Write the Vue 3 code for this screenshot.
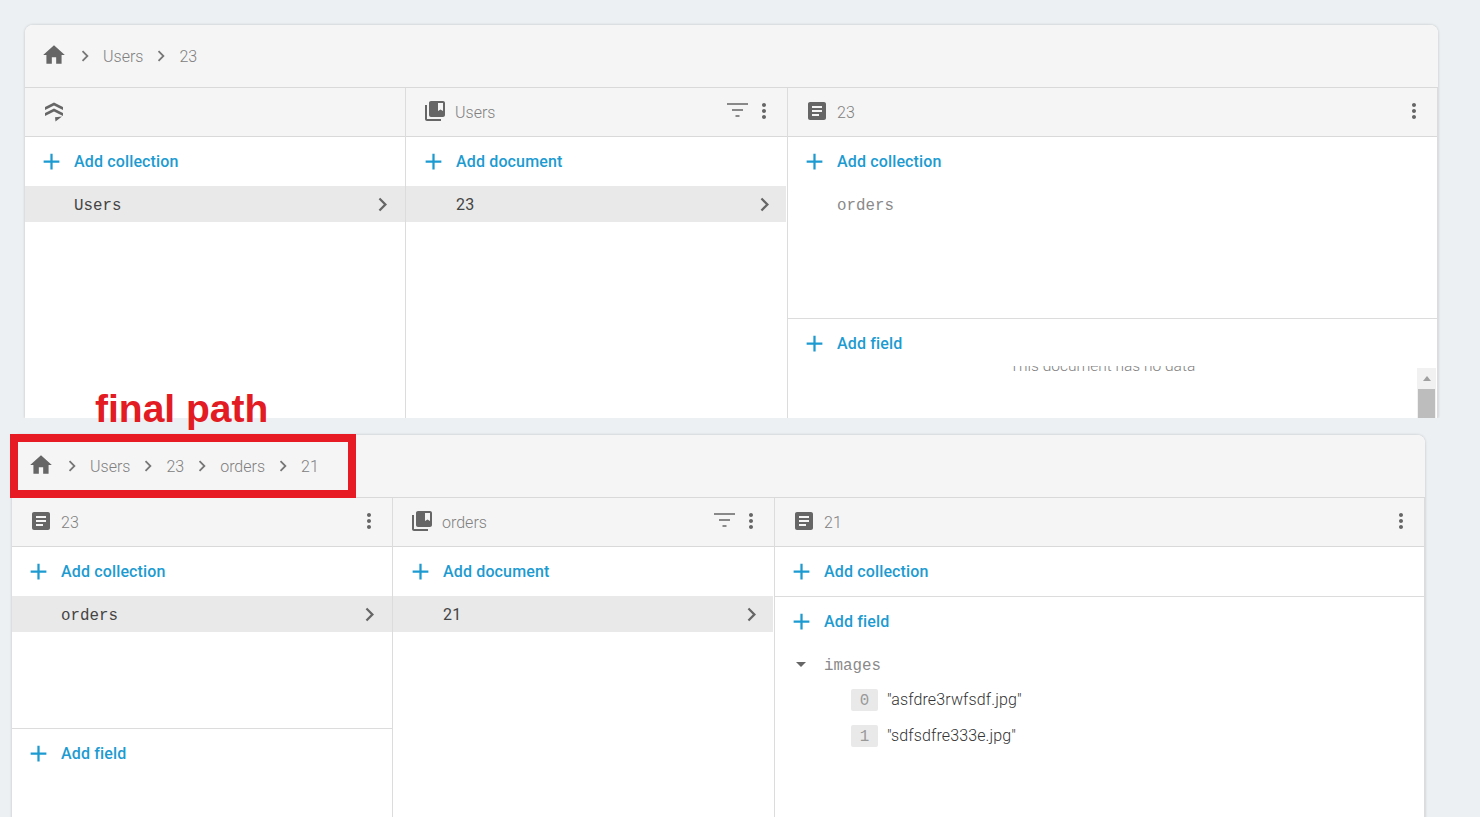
<script setup>
const icons = {
  home: 'M10 20v-6h4v6h5v-8h3L12 3 2 12h3v8z',
  chevron: 'M10 6L8.59 7.41 13.17 12l-4.58 4.59L10 18l6-6z',
  add: 'M19 13h-6v6h-2v-6H5v-2h6V5h2v6h6v2z',
  more: 'M12 8c1.1 0 2-.9 2-2s-.9-2-2-2-2 .9-2 2 .9 2 2 2zm0 2c-1.1 0-2 .9-2 2s.9 2 2 2 2-.9 2-2-.9-2-2-2zm0 6c-1.1 0-2 .9-2 2s.9 2 2 2 2-.9 2-2-.9-2-2-2z',
  filter: 'M2 4.200h21v1.600H2zM7 10.200h11v1.600H7zM10.500 16.200h4v1.600h-4z',
  doc: 'M19 3H5c-1.1 0-2 .9-2 2v14c0 1.1.9 2 2 2h14c1.1 0 2-.9 2-2V5c0-1.1-.9-2-2-2zm-5 14H7v-2h7v2zm3-4H7v-2h10v2zm0-4H7V7h10v2z',
  coll: 'M4 6H2v14c0 1.1.9 2 2 2h14v-2H4V6zm16-4H8c-1.1 0-2 .9-2 2v12c0 1.1.9 2 2 2h12c1.1 0 2-.9 2-2V4c0-1.1-.9-2-2-2zm0 10l-2.5-1.5L15 12V4h5v8z',
  root: 'M12 3.500L21 8v3l-9-4.500L3 11V8zM12 9.500l9 4.500v3l-9-4.500L3 17v-3zM13 18.200l7-.700-6.500 5z',
  drop: 'M7 10l5 5 5-5z'
}
</script>

<template>
  <div class="page">
    <!-- upper panel -->
    <section class="panel upper">
      <nav class="crumbs">
        <svg class="ic home" viewBox="0 0 24 24"><path :d="icons.home" /></svg>
        <template v-for="c in ['Users', '23']" :key="c">
          <svg class="ic sep" viewBox="0 0 24 24"><path :d="icons.chevron" /></svg>
          <span class="crumb">{{ c }}</span>
        </template>
      </nav>
      <div class="cols">
        <div class="col c1">
          <header class="head">
            <svg class="ic" viewBox="0 0 24 24"><path :d="icons.root" /></svg>
          </header>
          <div class="add"><svg class="ic plus" viewBox="0 0 24 24"><path :d="icons.add" /></svg>Add collection</div>
          <div class="row sel"><span class="mono">Users</span><svg class="ic chev" viewBox="0 0 24 24"><path :d="icons.chevron" /></svg></div>
        </div>
        <div class="col c2">
          <header class="head">
            <svg class="ic" viewBox="0 0 24 24"><path :d="icons.coll" /></svg>
            <span class="title">Users</span>
            <svg class="ic right" viewBox="0 0 24 24"><path :d="icons.filter" /></svg>
            <svg class="ic" viewBox="0 0 24 24"><path :d="icons.more" /></svg>
          </header>
          <div class="add"><svg class="ic plus" viewBox="0 0 24 24"><path :d="icons.add" /></svg>Add document</div>
          <div class="row sel"><span class="id">23</span><svg class="ic chev" viewBox="0 0 24 24"><path :d="icons.chevron" /></svg></div>
        </div>
        <div class="col c3">
          <header class="head">
            <svg class="ic" viewBox="0 0 24 24"><path :d="icons.doc" /></svg>
            <span class="title">23</span>
            <svg class="ic right" viewBox="0 0 24 24"><path :d="icons.more" /></svg>
          </header>
          <div class="subcols">
            <div class="add"><svg class="ic plus" viewBox="0 0 24 24"><path :d="icons.add" /></svg>Add collection</div>
            <div class="row"><span class="mono muted">orders</span></div>
          </div>
          <div class="add"><svg class="ic plus" viewBox="0 0 24 24"><path :d="icons.add" /></svg>Add field</div>
          <div class="nodata">
            <p>This document has no data</p>
            <div class="scrollbar"><span class="up"></span><span class="thumb"></span></div>
          </div>
        </div>
      </div>
    </section>

    <!-- lower panel -->
    <section class="panel lower">
      <nav class="crumbs">
        <svg class="ic home" viewBox="0 0 24 24"><path :d="icons.home" /></svg>
        <template v-for="c in ['Users', '23', 'orders', '21']" :key="c">
          <svg class="ic sep" viewBox="0 0 24 24"><path :d="icons.chevron" /></svg>
          <span class="crumb">{{ c }}</span>
        </template>
      </nav>
      <div class="cols">
        <div class="col c1">
          <header class="head">
            <svg class="ic" viewBox="0 0 24 24"><path :d="icons.doc" /></svg>
            <span class="title">23</span>
            <svg class="ic right" viewBox="0 0 24 24"><path :d="icons.more" /></svg>
          </header>
          <div class="subcols">
            <div class="add"><svg class="ic plus" viewBox="0 0 24 24"><path :d="icons.add" /></svg>Add collection</div>
            <div class="row sel"><span class="mono">orders</span><svg class="ic chev" viewBox="0 0 24 24"><path :d="icons.chevron" /></svg></div>
          </div>
          <div class="add"><svg class="ic plus" viewBox="0 0 24 24"><path :d="icons.add" /></svg>Add field</div>
        </div>
        <div class="col c2">
          <header class="head">
            <svg class="ic" viewBox="0 0 24 24"><path :d="icons.coll" /></svg>
            <span class="title">orders</span>
            <svg class="ic right" viewBox="0 0 24 24"><path :d="icons.filter" /></svg>
            <svg class="ic" viewBox="0 0 24 24"><path :d="icons.more" /></svg>
          </header>
          <div class="add"><svg class="ic plus" viewBox="0 0 24 24"><path :d="icons.add" /></svg>Add document</div>
          <div class="row sel"><span class="id">21</span><svg class="ic chev" viewBox="0 0 24 24"><path :d="icons.chevron" /></svg></div>
        </div>
        <div class="col c3">
          <header class="head">
            <svg class="ic" viewBox="0 0 24 24"><path :d="icons.doc" /></svg>
            <span class="title">21</span>
            <svg class="ic right" viewBox="0 0 24 24"><path :d="icons.more" /></svg>
          </header>
          <div class="add ruled"><svg class="ic plus" viewBox="0 0 24 24"><path :d="icons.add" /></svg>Add collection</div>
          <div class="add"><svg class="ic plus" viewBox="0 0 24 24"><path :d="icons.add" /></svg>Add field</div>
          <div class="tree">
            <div class="branch">
              <svg class="ic" viewBox="0 0 24 24"><path :d="icons.drop" /></svg>
              <span class="mono muted">images</span>
            </div>
            <div class="leaf"><span class="idx">0</span><span class="val">"asfdre3rwfsdf.jpg"</span></div>
            <div class="leaf"><span class="idx">1</span><span class="val">"sdfsdfre333e.jpg"</span></div>
          </div>
        </div>
      </div>
    </section>

    <!-- annotation drawn on top of the screenshot -->
    <div class="note">final path</div>
    <div class="notebox"></div>
  </div>
</template>

<style>
html, body { margin: 0; background: #ecf0f3; }
</style>

<style scoped>
.page {
  position: relative;
  height: 817px;
  overflow: hidden;
  box-sizing: border-box;
  padding-top: 25px;
  background: #ecf0f3;
  font-family: Roboto, "Liberation Sans", sans-serif;
  font-size: 16px;
  color: #757575;
}
.panel {
  width: 1413px;
  box-sizing: border-box;
  background: #fff;
  border-radius: 8px 8px 0 0;
  box-shadow: 0 0 3px rgba(0, 0, 0, .2);
  overflow: hidden;
  display: flex;
  flex-direction: column;
  clip-path: inset(-4px -4px 0 -4px);
}
.upper { height: 393px; margin-left: 25px; }
.lower { height: 400px; margin: 17px 0 0 12px; }
.crumbs {
  height: 61px;
  flex: none;
  display: flex;
  align-items: center;
  padding: 0 0 1px 17px;
  background: #f5f5f5;
  border-bottom: 1px solid #d9d9d9;
}
.ic { width: 24px; height: 24px; flex: none; fill: #666; display: block; }
.home { width: 26px; height: 26px; margin: -2px -1px 0 -1px; }
.sep { width: 22px; height: 22px; margin: 0 7px; fill: #777; }
.home + .sep { margin-left: 8px; }
.crumb { color: #808080; font-weight: 300; padding-top: 2px; }
.cols { flex: 1; min-height: 0; display: flex; }
.col { display: flex; flex-direction: column; box-sizing: border-box; border-right: 1px solid #dcdcdc; min-width: 0; }
.c1 { width: 381px; }
.c2 { width: 382px; }
.c3 { flex: 1; }
.head {
  flex: none;
  height: 48px;
  display: flex;
  align-items: center;
  padding: 0 11px 0 17px;
  background: #f5f5f5;
  border-bottom: 1px solid #d9d9d9;
}
.head .ic { margin-top: -2px; }
.title { margin-left: 8px; color: #808080; font-weight: 300; }
.right { margin-left: auto; }
.right + .ic { margin-left: 3px; }
.add {
  flex: none;
  height: 49px;
  display: flex;
  align-items: center;
  padding-left: 13px;
  font-weight: 500;
  letter-spacing: .15px;
  color: #1d9bd1;
}
.plus { width: 27px; height: 27px; fill: #1d9bd1; margin-right: 9px; }
.c2 .add { padding-left: 14px; }
.ruled { height: 50px; border-bottom: 1px solid #dcdcdc; box-sizing: border-box; }
.row {
  height: 36px;
  display: flex;
  align-items: center;
  justify-content: space-between;
  padding: 0 9px 0 49px;
}
.chev { width: 27px; height: 27px; }
.sel { background: #e9e9e9; }
.c2 .sel { margin-right: 1px; padding-left: 50px; padding-right: 8px; }
.mono { font-family: "Liberation Mono", "DejaVu Sans Mono", monospace; font-size: 15.8px; color: #444; padding-top: 4px; }
.muted { color: #8a8a8a; }
.id { color: #444; letter-spacing: .3px; }
.subcols { flex: none; height: 182px; border-bottom: 1px solid #dcdcdc; box-sizing: border-box; }
.nodata { position: relative; flex: 1; min-height: 0; overflow: hidden; margin-top: -2px; }
.nodata p {
  margin: -9px 0 0;
  text-align: center;
  font-size: 15.5px;
  font-weight: 300;
  line-height: 18px;
  color: #808080;
  padding-right: 20px;
}
.scrollbar {
  position: absolute;
  right: 1px;
  top: 2px;
  bottom: 0;
  width: 19px;
  background: #f1f1f1;
  display: flex;
  flex-direction: column;
  align-items: center;
}
.up {
  margin-top: 8px;
  border: 4px solid transparent;
  border-top: 0;
  border-bottom: 5px solid #a0a0a0;
}
.thumb { margin-top: 8px; width: 17px; flex: 1; background: #bdbdbd; }
.tree { padding: 0 0 0 14px; }
.branch { height: 36px; display: flex; align-items: center; gap: 11px; }
.leaf { height: 36px; display: flex; align-items: center; padding-left: 62px; color: #555; }
.val { font-weight: 300; letter-spacing: .12px; color: #333; margin-top: -2px; }
.idx {
  width: 27px;
  height: 22px;
  line-height: 24px;
  margin-right: 9px;
  text-align: center;
  background: #e9e9e9;
  border-radius: 2px;
  font-family: "Liberation Mono", monospace;
  font-size: 15.8px;
  color: #999;
}
.note {
  position: absolute;
  left: 95px;
  top: 387px;
  font-family: "Liberation Sans", Arial, sans-serif;
  font-weight: 700;
  font-size: 39px;
  line-height: 44px;
  color: #e31b23;
}
.notebox {
  position: absolute;
  left: 10px;
  top: 434px;
  width: 346px;
  height: 64px;
  box-sizing: border-box;
  border: 8px solid #e61b23;
}
</style>
